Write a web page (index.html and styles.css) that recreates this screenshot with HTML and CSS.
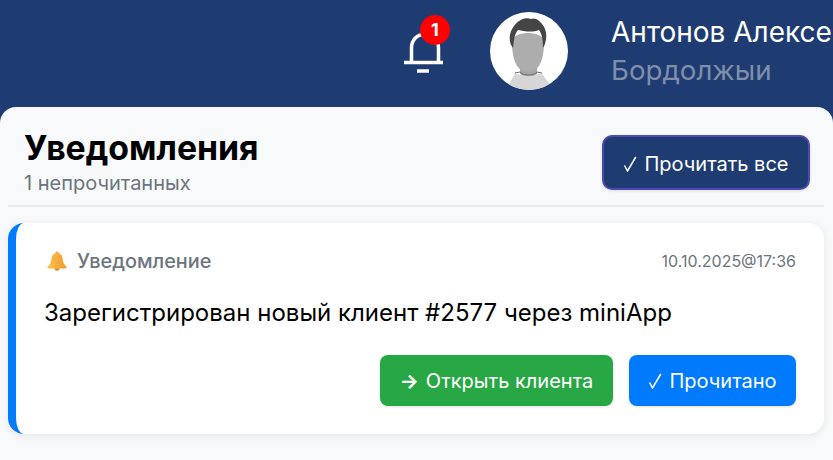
FILE: index.html
```html
<!DOCTYPE html>
<html lang="ru">
  <head>
    <meta charset="UTF-8">
    <meta name="viewport" content="width=device-width, initial-scale=1">
    <title>Уведомления</title>
    <link rel="stylesheet" href="styles.css">
  </head>
  <body>
    <header class="topbar">
      <div class="bell-wrap">
        <svg class="bell-icon" width="40" height="46" viewBox="0 0 40 46" fill="none" stroke="#fff" stroke-width="3.500">
          <path d="M1 34.500H40"/>
          <path d="M8.500 34V20C8.500 12 14 6.500 21 6.500C29 6.500 35.500 12 35.500 20V34"/>
          <path d="M14 43H26"/>
        </svg>
        <span class="badge">1</span>
      </div>
      <div class="avatar">
        <svg width="78" height="78" viewBox="0 0 78 78">
          <defs>
            <clipPath id="avatarClip"><circle cx="39" cy="39" r="39"/></clipPath>
          </defs>
          <circle cx="39" cy="39" r="39" fill="#fff"/>
          <g clip-path="url(#avatarClip)">
            <path d="M25 61C28 64 48 64 52 61C54 66 60 70 62 78H17C19 70 23 66 25 61Z" fill="#d6d6d6"/>
            <path d="M30 50H47V62C43 65 34 65 30 62Z" fill="#a5a5a5"/>
            <path d="M25 61L30 60C33 64 44 64 47 60L52 61" fill="none" stroke="#6f6f6f" stroke-width="1"/>
            <path d="M22 30C22 18 54 18 54 30C54 46 50 60 38 60C26 60 22 46 22 30Z" fill="#adadad"/>
            <path d="M23 36C18 30 19 20 24 14C29 7 36 5 41 7C45 5 50 9 52 12C57 17 58 28 53 36C53 28 52 22 49 18C42 21 33 19 28 18C24 22 24 30 23 36Z" fill="#454545"/>
          </g>
        </svg>
      </div>
      <div class="user-info">
        <div class="user-name">Антонов Алексей</div>
        <div class="user-role">Бордолжыи</div>
      </div>
    </header>

    <main class="sheet">
      <div class="sheet-head">
        <div>
          <h1 class="sheet-title">Уведомления</h1>
          <div class="sheet-sub">1 непрочитанных</div>
        </div>
        <button class="btn btn-all">
          <svg class="check-icon" width="14" height="16" viewBox="0 0 14 16"><path d="M1.500 9.500L4.500 15L12.800 1"/></svg>
          <span>Прочитать все</span>
        </button>
      </div>

      <div class="card">
        <div class="card-top">
          <div class="card-type">
            <svg class="type-icon" width="22" height="22" viewBox="0 0 22 22">
              <defs>
                <linearGradient id="bellFill" x1="0" y1="0" x2="1" y2="0">
                  <stop offset="0" stop-color="#fbc34e"/>
                  <stop offset="1" stop-color="#f09a2c"/>
                </linearGradient>
              </defs>
              <path d="M11 1.500C12 1.500 12.700 2.200 12.700 3.200C15.500 4 16.500 6.500 16.700 9.500C16.900 13 18.500 15 20.500 16.500C20.800 17.500 20 18.500 19 18.500H3C2 18.500 1.200 17.500 1.500 16.500C3.500 15 5.100 13 5.300 9.500C5.500 6.500 6.500 4 9.300 3.200C9.300 2.200 10 1.500 11 1.500Z" fill="url(#bellFill)"/>
              <path d="M8.500 18.500H13.500C13.500 20 12.500 20.500 11 20.500C9.500 20.500 8.500 20 8.500 18.500Z" fill="#d9801a"/>
            </svg>
            <span>Уведомление</span>
          </div>
          <div class="card-date">10.10.2025@17:36</div>
        </div>
        <div class="card-text">Зарегистрирован новый клиент #2577 через miniApp</div>
        <div class="card-actions">
          <button class="btn btn-open"><span class="arrow">→</span> Открыть клиента</button>
          <button class="btn btn-read">
            <svg class="check-icon" width="14" height="16" viewBox="0 0 14 16"><path d="M1.500 9.500L4.500 15L12.800 1"/></svg>
            <span>Прочитано</span>
          </button>
        </div>
      </div>
    </main>
  </body>
</html>
```

FILE: styles.css
```css
html, body {
  height: 100%;
}

body {
  margin: 0;
  overflow: hidden;
  background: #1e3c72;
  font-family: Inter, "Liberation Sans", sans-serif;
}

.topbar {
  height: 107px;
  box-sizing: border-box;
  display: flex;
  align-items: center;
  justify-content: flex-end;
  padding-bottom: 5px;
}

.bell-wrap {
  position: relative;
  width: 40px;
  height: 46px;
  margin-right: 47px;
}

.bell-icon {
  display: block;
}

.badge {
  position: absolute;
  top: -13px;
  left: 17px;
  width: 30px;
  height: 30px;
  border-radius: 50%;
  background: #f00;
  color: #fff;
  font-size: 18px;
  font-weight: 700;
  line-height: 30px;
  text-align: center;
}

.avatar {
  width: 78px;
  height: 78px;
  margin-right: 43px;
}

.avatar svg {
  display: block;
}

.user-info {
  width: 222px;
  overflow: hidden;
  white-space: nowrap;
}

.user-name {
  color: #fff;
  font-size: 28px;
  line-height: 38px;
}

.user-role {
  color: #7f8fa9;
  font-size: 27.700px;
  line-height: 38px;
}

.sheet {
  height: 353px;
  box-sizing: border-box;
  padding: 0 9px 0 8px;
  background: #f8f9fa;
  border-radius: 16px 16px 0 0;
}

.sheet-head {
  display: flex;
  justify-content: space-between;
  align-items: center;
  height: 100px;
  box-sizing: border-box;
  padding: 0 14px 0 16px;
  border-bottom: 2px solid #e9ecef;
}

.sheet-title {
  margin: 14px 0 0;
  color: #000;
  font-size: 33.800px;
  font-weight: 700;
  line-height: 40px;
}

.sheet-sub {
  color: #6c757d;
  font-size: 20px;
  line-height: 30px;
}

.btn {
  display: inline-flex;
  align-items: center;
  justify-content: center;
  gap: 7px;
  border: none;
  border-radius: 8px;
  color: #fff;
  font-family: inherit;
  font-size: 20px;
  cursor: pointer;
  box-shadow: 0 1px 3px rgba(0, 0, 0, 0.12);
}

.check-icon {
  fill: none;
  stroke: #fff;
  stroke-width: 1.500;
}

.arrow {
  font-weight: 700;
}

.btn-all {
  width: 208px;
  height: 55px;
  margin-top: 13px;
  padding-top: 3px;
  background: #1e3c72;
  border: 2px solid #4f48b0;
  border-radius: 10px;
}

.card {
  margin-top: 16px;
  height: 211px;
  box-sizing: border-box;
  padding: 26px 28px 28px 28px;
  background: #fff;
  border-left: 8px solid #007bff;
  border-radius: 16px;
  box-shadow: 0 2px 8px rgba(0, 0, 0, 0.08);
}

.card-top {
  display: flex;
  justify-content: space-between;
  align-items: center;
}

.card-type {
  display: flex;
  align-items: center;
  gap: 9px;
  color: #6c757d;
  font-size: 19.900px;
  font-weight: 500;
}

.type-icon {
  margin-left: 2px;
}

.card-date {
  color: #6c757d;
  font-size: 16px;
}

.card-text {
  margin-top: 23px;
  color: #000;
  font-size: 24px;
  line-height: 34px;
}

.card-actions {
  display: flex;
  justify-content: flex-end;
  gap: 16px;
  margin-top: 25px;
}

.btn-open {
  width: 233px;
  height: 51px;
  background: #28a745;
}

.btn-read {
  width: 167px;
  height: 51px;
  background: #007bff;
}
```
